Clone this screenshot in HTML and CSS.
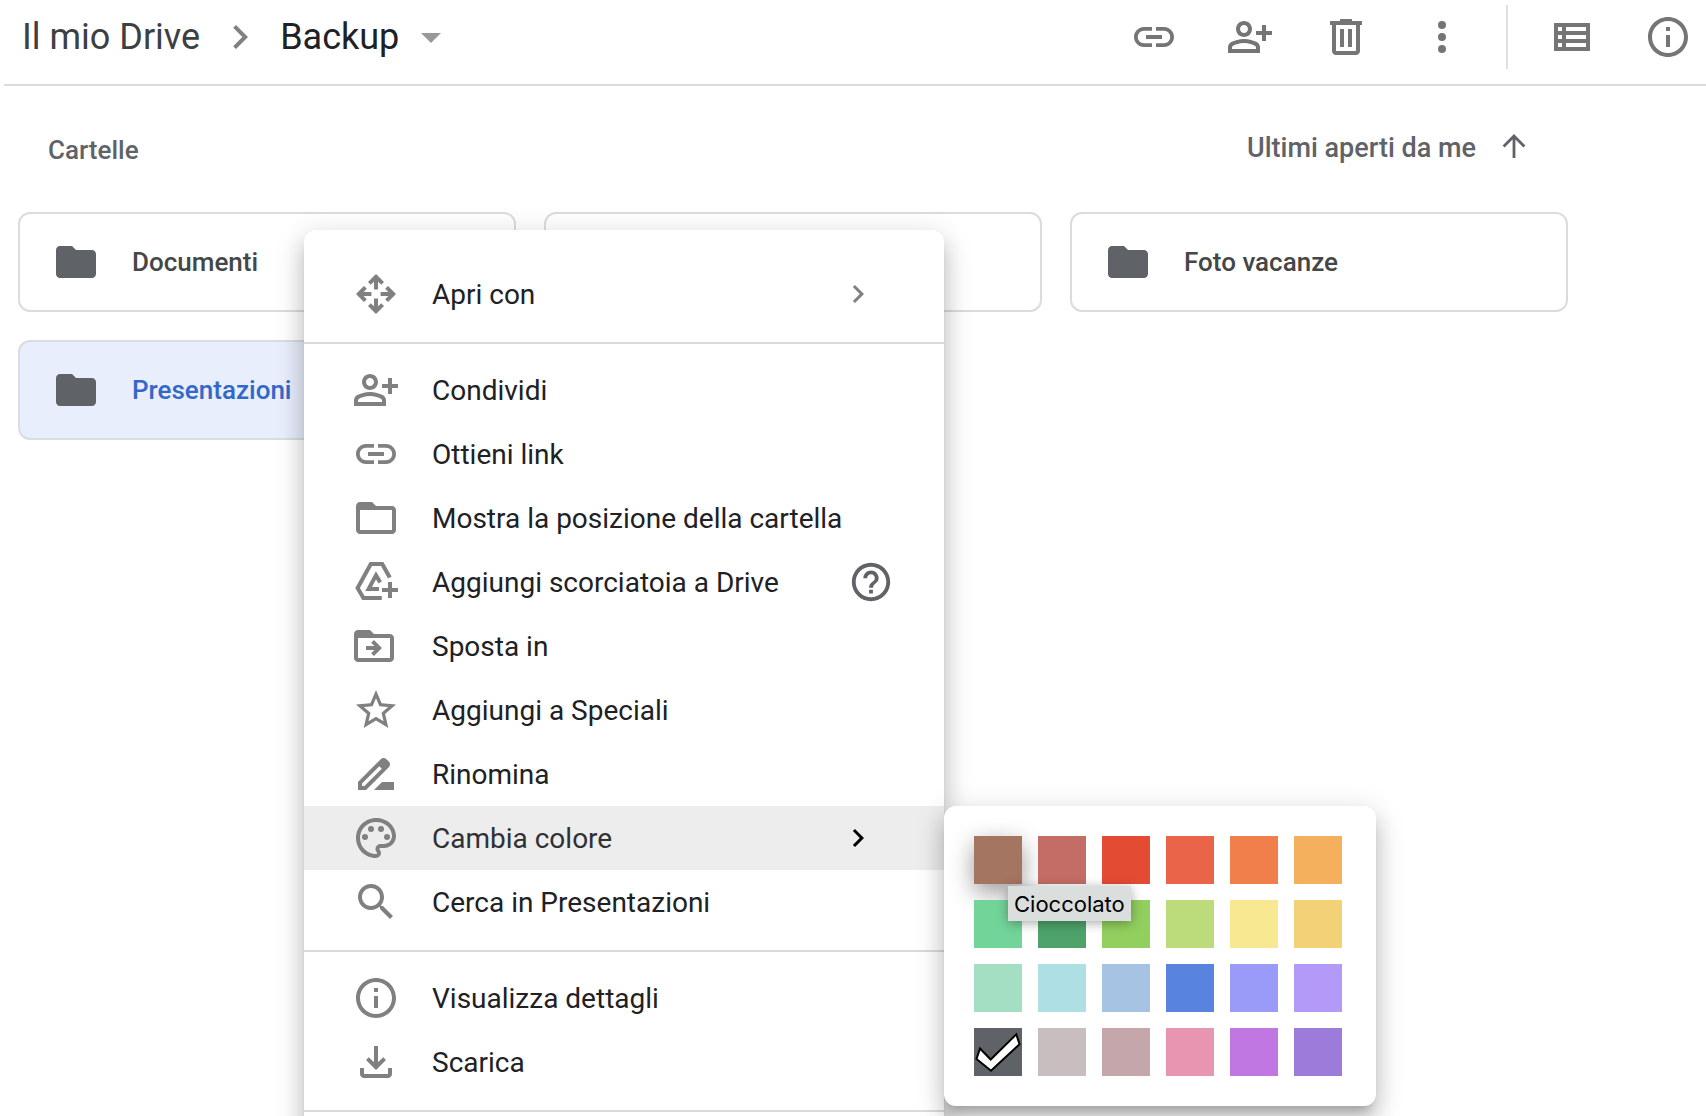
FILE: index.html
```html
<!DOCTYPE html>
<html lang="it">
<head>
<meta charset="utf-8">
<title>Backup - Drive</title>
<meta name="viewport" content="width=device-width, initial-scale=1">
<link rel="stylesheet" href="styles.css">
</head>
<body>
<svg class="sprite" aria-hidden="true">
  <symbol id="i-link" viewBox="0 0 24 24"><path d="M3.9 12c0-1.71 1.39-3.1 3.1-3.1h4V7H7c-2.76 0-5 2.24-5 5s2.24 5 5 5h4v-1.9H7c-1.71 0-3.1-1.39-3.1-3.1zM8 13h8v-2H8v2zm9-6h-4v1.9h4c1.71 0 3.1 1.39 3.1 3.1s-1.39 3.1-3.1 3.1h-4V17h4c2.76 0 5-2.24 5-5s-2.24-5-5-5z"/></symbol>
  <symbol id="i-share" viewBox="0 0 24 24"><path d="M20 9V6h-2v3h-3v2h3v3h2v-3h3V9h-3zM9 12c2.21 0 4-1.79 4-4s-1.79-4-4-4-4 1.79-4 4 1.79 4 4 4zm0-6c1.1 0 2 .9 2 2s-.9 2-2 2-2-.9-2-2 .9-2 2-2zM15.39 14.56C13.71 13.7 11.53 13 9 13s-4.71.7-6.39 1.56C1.61 15.07 1 16.1 1 17.22V20h16v-2.78c0-1.12-.61-2.15-1.61-2.66zM15 18H3v-.78c0-.38.2-.72.52-.88C4.71 15.73 6.63 15 9 15s4.29.73 5.48 1.34c.32.16.52.5.52.88V18z"/></symbol>
  <symbol id="i-trash" viewBox="0 0 24 24"><path d="M15 4V3H9v1H4v2h1v13c0 1.1.9 2 2 2h10c1.1 0 2-.9 2-2V6h1V4h-5zm2 15H7V6h10v13zM9 8h2v9H9V8zm4 0h2v9h-2V8z"/></symbol>
  <symbol id="i-more" viewBox="0 0 24 24"><circle cx="12" cy="6" r="2"/><circle cx="12" cy="12" r="2"/><circle cx="12" cy="18" r="2"/></symbol>
  <symbol id="i-list" viewBox="0 0 24 24"><path d="M3 5v14h18V5H3zm4 2v2H5V7h2zm-2 6v-2h2v2H5zm0 2h2v2H5v-2zm14 2H9v-2h10v2zm0-4H9v-2h10v2zm0-4H9V7h10v2z"/></symbol>
  <symbol id="i-info" viewBox="0 0 24 24"><path d="M11 7h2v2h-2V7zm0 4h2v6h-2v-6zm1-9C6.48 2 2 6.48 2 12s4.48 10 10 10 10-4.48 10-10S17.52 2 12 2zm0 18c-4.41 0-8-3.59-8-8s3.59-8 8-8 8 3.59 8 8-3.59 8-8 8z"/></symbol>
  <symbol id="i-chevron" viewBox="0 0 24 24"><path d="M10 6L8.59 7.41 13.17 12l-4.58 4.59L10 18l6-6-6-6z"/></symbol>
  <symbol id="i-caret" viewBox="0 0 24 24"><path d="M7 10l5 5 5-5z"/></symbol>
  <symbol id="i-up" viewBox="0 0 24 24"><path d="M12 17V6M6.800 11.200L12 6l5.200 5.200" fill="none" stroke="currentColor" stroke-width="1.400"/></symbol>
  <symbol id="i-folder" viewBox="0 0 24 24"><path d="M10 4H4c-1.1 0-2 .9-2 2v12c0 1.1.9 2 2 2h16c1.1 0 2-.9 2-2V8c0-1.1-.9-2-2-2h-8l-2-2z"/></symbol>
  <symbol id="i-openwith" viewBox="0 0 24 24"><g fill="none" stroke="currentColor" stroke-width="2"><path d="M12 9.700V4M8.700 6.700l3.300-3.300 3.300 3.300M12 14.300V20M8.700 17.300l3.300 3.300 3.300-3.300M9.700 12H4M6.700 8.700l-3.300 3.300 3.300 3.300M14.300 12H20M17.300 8.700l3.300 3.300-3.300 3.300"/></g></symbol>
  <symbol id="i-folder-line" viewBox="0 0 24 24"><path d="M20 6h-8l-2-2H4C2.900 4 2 4.900 2 6v12c0 1.100.9 2 2 2h16c1.100 0 2-.9 2-2V8c0-1.100-.9-2-2-2zm0 12H4V8h16v10z"/></symbol>
  <symbol id="i-shortcut" viewBox="0 0 24 24"><path d="M18.900 9.800L15.100 3H9.400L2.800 15l2.900 5h9.200M14.100 12.200L12 8.700 8.300 15.500h5.200M19 12v8M15 16h8" fill="none" stroke="currentColor" stroke-width="2"/></symbol>
  <symbol id="i-move" viewBox="1 0 24 24"><path d="M20 6h-8l-2-2H4C2.900 4 2 4.900 2 6v12c0 1.100.9 2 2 2h16c1.100 0 2-.9 2-2V8c0-1.100-.9-2-2-2zm0 12H4V8h16v10z"/><path d="M12.160 12H8v2h4.160l-1.590 1.590L11.990 17 16 13.010 11.990 9l-1.410 1.410L12.160 12z"/></symbol>
  <symbol id="i-star" viewBox="0 0 24 24"><path d="M22 9.240l-7.190-.62L12 2 9.190 8.630 2 9.240l5.460 4.730L5.820 21 12 17.270 18.180 21l-1.630-7.030L22 9.240zM12 15.400l-3.760 2.270 1-4.280-3.320-2.880 4.380-.38L12 6.100l1.710 4.040 4.380.38-3.320 2.880 1 4.280L12 15.400z"/></symbol>
  <symbol id="i-rename" viewBox="0 0 24 24"><path d="M18.410 5.800L17.200 4.590c-.78-.78-2.050-.78-2.830 0l-2.680 2.680L3 15.960V20h4.040l8.740-8.740 2.630-2.630c.79-.78.79-2.050 0-2.830zM6.210 18H5v-1.210l8.660-8.660 1.210 1.210L6.210 18zM11 20l4-4h6v4H11z"/></symbol>
  <symbol id="i-palette" viewBox="0 0 24 24"><path d="M12 22C6.490 22 2 17.510 2 12S6.490 2 12 2s10 4.040 10 9c0 3.310-2.690 6-6 6h-1.770c-.28 0-.5.22-.5.5 0 .12.05.23.13.33.41.47.64 1.060.64 1.670A2.500 2.500 0 0 1 12 22zm0-18c-4.410 0-8 3.590-8 8s3.590 8 8 8c.28 0 .5-.22.5-.5a.54.54 0 0 0-.14-.35c-.41-.46-.63-1.050-.63-1.650a2.500 2.500 0 0 1 2.500-2.500H16c2.210 0 4-1.790 4-4 0-3.860-3.590-7-8-7z"/><circle cx="6.500" cy="11.500" r="1.500"/><circle cx="9.500" cy="7.500" r="1.500"/><circle cx="14.500" cy="7.500" r="1.500"/><circle cx="17.500" cy="11.500" r="1.500"/></symbol>
  <symbol id="i-search" viewBox="0 0 24 24"><path d="M15.500 14h-.79l-.28-.27C15.410 12.590 16 11.110 16 9.500 16 5.910 13.090 3 9.500 3S3 5.910 3 9.500 5.910 16 9.500 16c1.610 0 3.090-.59 4.230-1.570l.27.28v.79l5 4.990L20.490 19l-4.990-5zm-6 0C7.010 14 5 11.990 5 9.500S7.010 5 9.500 5 14 7.010 14 9.500 11.990 14 9.500 14z"/></symbol>
  <symbol id="i-download" viewBox="0 0 24 24"><path d="M17 11l-1.410-1.410L13 12.170V4h-2v8.170L8.410 9.590 7 11l5 5 5-5z"/><path d="M4 15v3c0 1.100.9 2 2 2h12c1.100 0 2-.9 2-2v-3h-2v3H6v-3H4z"/></symbol>
  <symbol id="i-help" viewBox="0 0 24 24"><path d="M11 18h2v-2h-2v2zm1-16C6.480 2 2 6.480 2 12s4.480 10 10 10 10-4.480 10-10S17.520 2 12 2zm0 18c-4.410 0-8-3.590-8-8s3.590-8 8-8 8 3.590 8 8-3.590 8-8 8zm0-14c-2.210 0-4 1.790-4 4h2c0-1.100.9-2 2-2s2 .9 2 2c0 2-3 1.750-3 5h2c0-2.250 3-2.500 3-5 0-2.210-1.790-4-4-4z"/></symbol>
  <symbol id="i-check" viewBox="0 0 48 48"><path d="M6 20.500L16.700 31.500 42.300 6.300 45.500 16.300 17 42.800 2.500 31z" fill="#fff" stroke="#000" stroke-width="2"/></symbol>
</svg>

<header class="toolbar">
  <nav class="crumbs" aria-label="Percorso">
    <a class="crumb" href="#drive">Il mio Drive</a>
    <svg class="icon crumb-sep"><use href="#i-chevron"/></svg>
    <button class="crumb current" type="button">Backup<svg class="icon caret"><use href="#i-caret"/></svg></button>
  </nav>
  <div class="actions">
    <button class="tool" type="button" aria-label="Ottieni link"><svg class="icon"><use href="#i-link"/></svg></button>
    <button class="tool" type="button" aria-label="Condividi"><svg class="icon"><use href="#i-share"/></svg></button>
    <button class="tool" type="button" aria-label="Rimuovi"><svg class="icon"><use href="#i-trash"/></svg></button>
    <button class="tool" type="button" aria-label="Altre azioni"><svg class="icon"><use href="#i-more"/></svg></button>
    <span class="divider"></span>
    <button class="tool" type="button" aria-label="Layout elenco"><svg class="icon"><use href="#i-list"/></svg></button>
    <button class="tool" type="button" aria-label="Visualizza dettagli"><svg class="icon"><use href="#i-info"/></svg></button>
  </div>
</header>

<main class="content">
  <div class="section-head">
    <h2 class="section-title">Cartelle</h2>
    <button class="sort" type="button">Ultimi aperti da me<svg class="icon"><use href="#i-up"/></svg></button>
  </div>
  <div class="folders">
    <button class="folder" type="button"><svg class="icon"><use href="#i-folder"/></svg>Documenti</button>
    <button class="folder" type="button" aria-label="Cartella"></button>
    <button class="folder" type="button"><svg class="icon"><use href="#i-folder"/></svg>Foto vacanze</button>
    <button class="folder selected" type="button"><svg class="icon"><use href="#i-folder"/></svg>Presentazioni</button>
  </div>
</main>

<div class="menu" role="menu">
  <button class="item" role="menuitem" type="button"><svg class="icon"><use href="#i-openwith"/></svg>Apri con<svg class="arrow"><use href="#i-chevron"/></svg></button>
  <hr class="rule">
  <button class="item" role="menuitem" type="button"><svg class="icon"><use href="#i-share"/></svg>Condividi</button>
  <button class="item" role="menuitem" type="button"><svg class="icon"><use href="#i-link"/></svg>Ottieni link</button>
  <button class="item" role="menuitem" type="button"><svg class="icon"><use href="#i-folder-line"/></svg>Mostra la posizione della cartella</button>
  <button class="item" role="menuitem" type="button"><svg class="icon"><use href="#i-shortcut"/></svg>Aggiungi scorciatoia a Drive<svg class="help"><use href="#i-help"/></svg></button>
  <button class="item" role="menuitem" type="button"><svg class="icon"><use href="#i-move"/></svg>Sposta in</button>
  <button class="item" role="menuitem" type="button"><svg class="icon"><use href="#i-star"/></svg>Aggiungi a Speciali</button>
  <button class="item" role="menuitem" type="button"><svg class="icon"><use href="#i-rename"/></svg>Rinomina</button>
  <div class="has-submenu">
    <button class="item active" role="menuitem" type="button" aria-expanded="true"><svg class="icon"><use href="#i-palette"/></svg>Cambia colore<svg class="arrow"><use href="#i-chevron"/></svg></button>
    <div class="palette">
      <button class="swatch chocolate" type="button" aria-label="Cioccolato"></button>
      <button class="swatch brick" type="button" aria-label="Mattone"></button>
      <button class="swatch cardinal" type="button" aria-label="Rosso cardinale"></button>
      <button class="swatch rust" type="button" aria-label="Ruggine"></button>
      <button class="swatch pumpkin" type="button" aria-label="Zucca"></button>
      <button class="swatch mango" type="button" aria-label="Mango"></button>
      <button class="swatch spearmint" type="button" aria-label="Menta"></button>
      <button class="swatch grass" type="button" aria-label="Erba"></button>
      <button class="swatch lime" type="button" aria-label="Lime"></button>
      <button class="swatch asparagus" type="button" aria-label="Asparago"></button>
      <button class="swatch custard" type="button" aria-label="Crema"></button>
      <button class="swatch sun" type="button" aria-label="Sole"></button>
      <button class="swatch sea" type="button" aria-label="Schiuma di mare"></button>
      <button class="swatch pool" type="button" aria-label="Piscina"></button>
      <button class="swatch sky" type="button" aria-label="Cielo"></button>
      <button class="swatch cobalt" type="button" aria-label="Cobalto"></button>
      <button class="swatch rain" type="button" aria-label="Pioggia"></button>
      <button class="swatch violet" type="button" aria-label="Violetto"></button>
      <button class="swatch slate" type="button" aria-label="Grigio" aria-pressed="true"><svg class="icon"><use href="#i-check"/></svg></button>
      <button class="swatch mouse" type="button" aria-label="Topo"></button>
      <button class="swatch earth" type="button" aria-label="Terra"></button>
      <button class="swatch gum" type="button" aria-label="Rosa"></button>
      <button class="swatch orchid" type="button" aria-label="Orchidea"></button>
      <button class="swatch amethyst" type="button" aria-label="Ametista"></button>
      <span class="tip" role="tooltip">Cioccolato</span>
    </div>
  </div>
  <button class="item" role="menuitem" type="button"><svg class="icon"><use href="#i-search"/></svg>Cerca in Presentazioni</button>
  <hr class="rule">
  <button class="item" role="menuitem" type="button"><svg class="icon"><use href="#i-info"/></svg>Visualizza dettagli</button>
  <button class="item" role="menuitem" type="button"><svg class="icon"><use href="#i-download"/></svg>Scarica</button>
  <hr class="rule">
</div>
</body>
</html>
```

FILE: styles.css
```css
* {
  box-sizing: border-box;
}

body {
  position: relative;
  height: 100vh;
  margin: 0;
  overflow: hidden;
  background: #fff;
  color: #202124;
  font-family: Roboto, "Liberation Sans", sans-serif;
  font-size: 28px;
}

button {
  margin: 0;
  padding: 0;
  border: 0;
  background: none;
  color: inherit;
  font: inherit;
  text-align: left;
}

.sprite {
  position: absolute;
  width: 0;
  height: 0;
}

.icon {
  display: block;
  flex: none;
  width: 48px;
  height: 48px;
  fill: currentColor;
}

/* Toolbar */

.toolbar {
  display: flex;
  align-items: center;
  justify-content: space-between;
  margin-left: 4px;
  padding: 5px 14px 15px 18px;
  border-bottom: 2px solid #dadada;
}

.crumbs,
.current {
  display: flex;
  align-items: center;
}

.crumbs {
  gap: 16px;
}

.crumb {
  color: #3c4043;
  font-size: 36px;
  line-height: 48px;
  text-decoration: none;
}

.current {
  gap: 8px;
  color: #202124;
}

.crumb-sep {
  color: #808080;
}

.caret {
  color: #999;
}

.actions {
  display: flex;
  align-items: center;
  gap: 48px;
  color: #757575;
}

.divider {
  width: 2px;
  height: 64px;
  margin: 0 -8px;
  background: #e0e0e0;
}

/* Folder list */

.content {
  padding: 38px 138px 0 18px;
}

.section-head {
  display: flex;
  align-items: flex-start;
  justify-content: space-between;
  padding: 0 30px;
  color: #5f6368;
  font-weight: 500;
}

.section-title {
  margin: 0;
  font-size: 26px;
  font-weight: 500;
  line-height: 52px;
}

.sort {
  display: flex;
  align-items: center;
  gap: 14px;
  font-size: 27px;
  font-weight: 500;
  line-height: 48px;
}

.folders {
  display: grid;
  grid-template-columns: repeat(3, 1fr);
  gap: 28px;
  padding-top: 36px;
}

.folder {
  display: flex;
  align-items: center;
  gap: 32px;
  height: 100px;
  padding: 0 32px;
  border: 2px solid #dadce0;
  border-radius: 12px;
  color: #444746;
  font-size: 26px;
  font-weight: 500;
}

.folder .icon {
  color: #5f6368;
}

.selected {
  background: #e8eefc;
  color: #3367c8;
}

/* Context menu */

.menu,
.palette {
  border-radius: 12px;
  background: #fff;
  box-shadow: 0 16px 20px 2px rgba(0, 0, 0, 0.14),
    0 6px 28px 4px rgba(0, 0, 0, 0.12),
    0 10px 10px -6px rgba(0, 0, 0, 0.2);
}

.menu {
  position: absolute;
  top: 230px;
  left: 304px;
  width: 640px;
  padding: 32px 0;
}

.item {
  display: flex;
  align-items: center;
  gap: 32px;
  width: 100%;
  height: 64px;
  padding: 0 48px;
}

.item .icon {
  color: #808080;
}

.active {
  background: #ededed;
  color: #303134;
}

.arrow {
  width: 36px;
  height: 36px;
  margin-left: auto;
  margin-right: 20px;
  fill: #808080;
}

.active .arrow {
  fill: #000;
}

.help {
  width: 46px;
  height: 46px;
  margin-left: auto;
  margin-right: 2px;
  fill: #5f6368;
}

.rule {
  height: 2px;
  margin: 16px 0 14px;
  border: 0;
  background: #dadada;
}

/* Colour picker */

.has-submenu {
  position: relative;
}

.palette {
  position: absolute;
  top: 0;
  left: 100%;
  display: grid;
  grid-template-columns: repeat(6, 48px);
  gap: 16px;
  padding: 30px 34px 30px 30px;
}

.swatch {
  height: 48px;
}

.chocolate {
  background: #a47561;
  box-shadow: 0 8px 24px rgba(0, 0, 0, 0.4);
}

.brick { background: #c36d66; }
.cardinal { background: #e44b33; }
.rust { background: #e96448; }
.pumpkin { background: #f07f4b; }
.mango { background: #f4b05d; }
.spearmint { background: #72d499; }
.grass { background: #4ea36b; }
.lime { background: #91cf5e; }
.asparagus { background: #bcdb7b; }
.custard { background: #f8e891; }
.sun { background: #f3d277; }
.sea { background: #a5dfc3; }
.pool { background: #aedfe4; }
.sky { background: #a6c3e3; }
.cobalt { background: #5884df; }
.rain { background: #9a9bf8; }
.violet { background: #b39af8; }
.slate { background: #5f6368; }
.mouse { background: #c8bdbf; }
.earth { background: #c5a7ab; }
.gum { background: #e895b1; }
.orchid { background: #c077e1; }
.amethyst { background: #9c7bda; }

.tip {
  position: absolute;
  top: 80px;
  left: 64px;
  padding: 1px 6px 0;
  background: #dadedc;
  box-shadow: 0 2px 12px rgba(0, 0, 0, 0.35);
  color: #000;
  font-family: Inter, sans-serif;
  font-size: 22px;
  line-height: 34px;
}
```
